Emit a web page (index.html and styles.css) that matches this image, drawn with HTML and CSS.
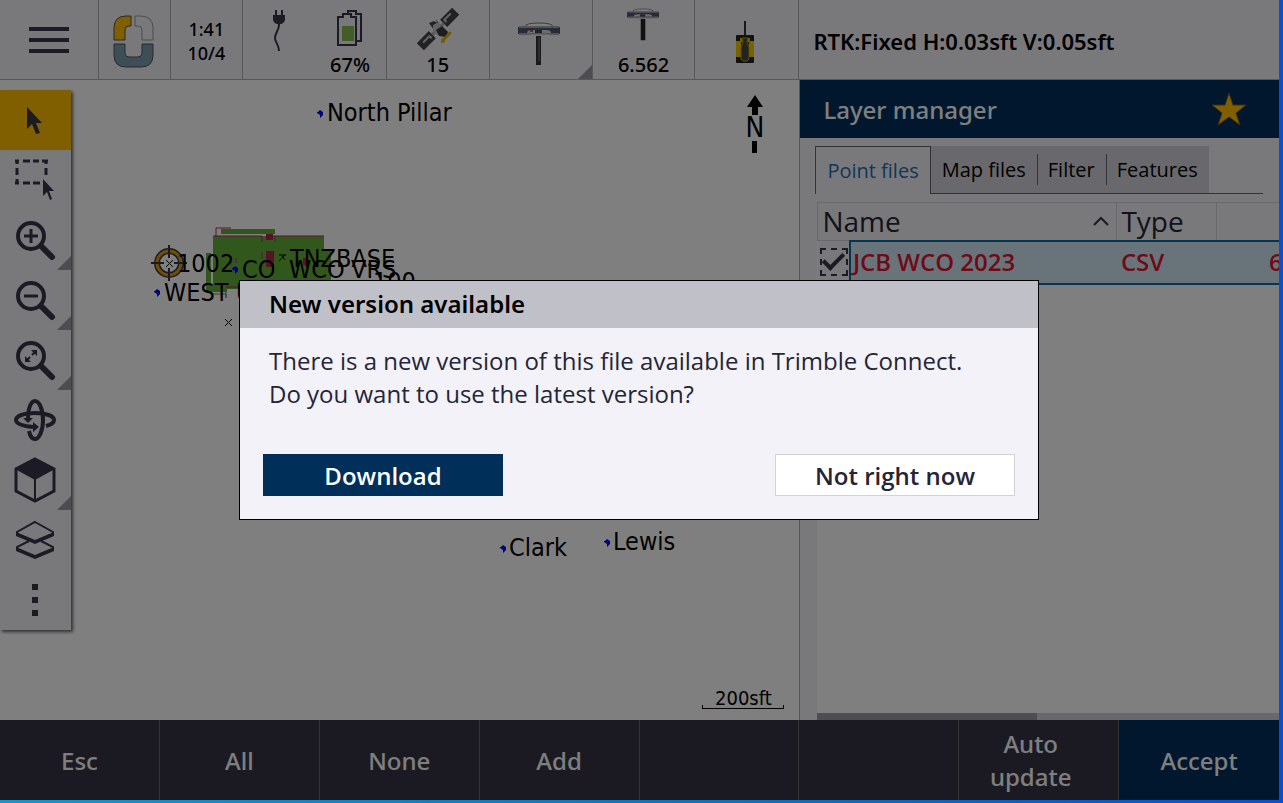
FILE: index.html
```html
<!DOCTYPE html>
<html lang="en">

<head>
    <meta charset="utf-8">
    <title>Layer manager</title>
    <link rel="stylesheet" href="styles.css">
</head>

<body>
    <div class="app">
        <header class="status-bar">
            <button class="status-item item-menu" aria-label="Menu">
                <svg width="42" height="28" viewBox="0 0 42 28"><path d="M1 3h40M1 14h40M1 25h40" stroke="#38364a" stroke-width="4" /></svg>
            </button>
            <button class="status-item item-logo" aria-label="Home">
                <svg width="42" height="54" viewBox="0 0 42 54" stroke-width="1">
                    <path d="M1 25V13Q1 1 13 1h5v10h-2q-4 0-4 4v10z" fill="#ffbe00" stroke="#555" />
                    <path d="M22 1h5q13 0 13 12v12H29V15q0-4-4-4h-3z" fill="#f2f2f6" stroke="#999" />
                    <path d="M1 29h11v9q0 4 4 4h9q4 0 4-4v-9h11v11q0 12-12 12H13Q1 52 1 40z" fill="#7b9cae" stroke="#555" />
                </svg>
            </button>
            <div class="status-item item-clock">1:41<br>10/4</div>
            <button class="status-item item-power" aria-label="Battery 67%">
                <span class="power-cell">
                    <svg width="14" height="42" viewBox="0 0 14 42"><path d="M4 0v6M10 0v6" stroke="#38364a" stroke-width="2" /><path d="M1 5h12v4q0 4-4 5H5q-4-1-4-5z" fill="#38364a" /><path d="M7 13v2c0 5-4 8-4 13 0 4 4 7 4 13" fill="none" stroke="#38364a" stroke-width="2" /></svg>
                </span>
                <span class="power-cell">
                    <svg width="26" height="36" viewBox="0 0 26 36" fill="none" stroke="#38364a" stroke-width="2"><path d="M6 6V4h5V1h8v3h5v27h-4" /><path d="M1 35V7h5V4h8v3h5v28z" fill="#f2f2f8" /><path d="M5 16h12v15H5z" fill="#85bb50" stroke="none" /></svg>
                    67%
                </span>
            </button>
            <button class="status-item" aria-label="15 satellites">
                <svg class="satellite" width="42" height="42" viewBox="0 0 42 42">
                    <g transform="rotate(-45 21 21)"><path d="M-4 16h17v10H-4zM29 16h17v10H29z" fill="#454545" /><path d="M1 20h9v3M32 22v-3h9" fill="none" stroke="#c8c8d0" stroke-width="2" /><path d="M13 21h16" stroke="#aaa" stroke-width="3" /></g>
                    <path d="M12 15l5-2 3 2-1-4 3 5-5 6z" fill="#444" /><path d="M16 17l6-3 3 8-5 5-4-3z" fill="#c8c8d0" /><path d="M19 22l6-4 6 6-2 5-7-1z" fill="#3d3d3d" /><path d="M25 33l8-8" stroke="#e0b400" stroke-width="3" /><path d="M34 24l-3 3M28 33l-4 1" stroke="#e0b400" stroke-width="2" />
                </svg>
                15
            </button>
            <button class="status-item item-receiver has-more" aria-label="Receiver">
                <svg width="42" height="44" viewBox="0 0 42 44"><path d="M7 5q0-4 14-4t14 4z" fill="#fff" stroke="#777" /><path d="M0 5h42v7H0z" fill="#4c5670" /><path d="M1 5h40M1 12h40" stroke="#aaa" stroke-width="2" /><path d="M9 11q0-3 5-3h14q5 0 5 3z" fill="#ddd" /><path d="M17 8h7v3h-7z" fill="#445" /><path d="M12 9h3" stroke="#b55" stroke-width="2" /><path d="M11 13h20" stroke="#eee" /><path d="M18 14h5v29h-5z" fill="#333" /><path d="M21 15v24" stroke="#888" /></svg>
            </button>
            <button class="status-item" aria-label="Antenna height 6.562">
                <svg width="32" height="34" viewBox="0 0 42 44"><path d="M7 5q0-4 14-4t14 4z" fill="#fff" stroke="#777" /><path d="M0 5h42v7H0z" fill="#4c5670" /><path d="M1 5h40M1 12h40" stroke="#aaa" stroke-width="2" /><path d="M9 11q0-3 5-3h14q5 0 5 3z" fill="#ddd" /><path d="M17 8h7v3h-7z" fill="#445" /><path d="M18 14h6v28h-6z" fill="#222" /></svg>
                6.562
            </button>
            <button class="status-item item-radio" aria-label="Instrument">
                <svg width="18" height="42" viewBox="0 0 18 42"><path d="M9 0v16" stroke="#333" stroke-width="2" /><rect y="14" width="18" height="28" rx="1" fill="#222" /><path d="M0 20h5v16H0zM13 20h5v16h-5z" fill="#eec800" /><path d="M4 17h10v4H4z" fill="#ddbb00" /><path d="M6 17h6l-1 4 2 5v12l-2 2H7l-2-2V26l2-5z" fill="#444" stroke="#bba000" stroke-width="1" /></svg>
            </button>
        </header>
        <div class="rtk-status">RTK:Fixed H:0.03sft V:0.05sft</div>

        <main class="map">
            <svg class="map-drawing" role="img" aria-label="Map">
                <g fill="#65af38">
                    <path d="M213 156h111v53H213z" />
                    <path d="M221 149h54v5h-54z" />
                    <path d="M206 173h5v38h-5zM206 206h21v6h-21z" />
                    <path d="M313 170h18v32h-18z" />
                </g>
                <path d="M216 156v-8h15M213 156h49M272 156h52M226 207h12" stroke="#b02060" fill="none" />
                <path d="M266 154h7v6h-7zM266 171h8v16h-8zM303 178h4v7h-4z" fill="#b0244c" />
                <path d="M262 156v6M275 156v6M262 172v7M231 180v5M236 178v5" stroke="#b020a0" />
                <path d="M211 214h15v4M226 218v-9" stroke="#777" fill="none" />
                <g stroke="#000" fill="none">
                    <path d="M225 239l7 7M232 239l-7 7" />
                    <path d="M279 175h7M279 181l6-6M282 176l3 4" />
                </g>
                <g fill="none">
                    <circle cx="169" cy="183" r="12" stroke="#38364a" stroke-width="6" />
                    <circle cx="169" cy="183" r="12" stroke="#e0a000" stroke-width="3" />
                    <path d="M151 183h13M174 183h13M169 165v13M169 188v13" stroke="#38364a" stroke-width="2" />
                    <path d="M166 180l7 7M173 180l-7 7" stroke="#000" />
                </g>
                <g fill="#0000ff">
                    <path id="dot" d="M317 32h1l2-2 3 2v3l-3 3v-3l-3-2z" />
                    <use href="#dot" x="-163" y="179" />
                    <use href="#dot" x="-85" y="156" />
                    <use href="#dot" x="183" y="435" />
                    <use href="#dot" x="287" y="429" />
                </g>
                <g class="labels">
                    <text x="327" y="41">North Pillar</text>
                    <text x="177" y="192">1002</text>
                    <text x="242" y="198">CO</text>
                    <text x="289" y="198">WCO</text>
                    <text x="351" y="198">VRS</text>
                    <text x="290" y="187">TNZBASE</text>
                    <text x="373" y="210">100</text>
                    <text x="164" y="221">WEST</text>
                    <text x="236" y="221">U</text>
                    <text x="509" y="476">Clark</text>
                    <text x="613" y="470">Lewis</text>
                </g>
            </svg>
            <div class="compass">
                <svg width="16" height="20" viewBox="0 0 16 20"><path d="M8 0l8 12h-5v8H5v-8H0z" /></svg>
                <span>N</span>
                <svg width="5" height="12" viewBox="0 0 5 12"><path d="M0 0h5v12H0z" /></svg>
            </div>
            <div class="scale">200sft</div>

            <nav class="toolbar" aria-label="Map tools">
                <button class="tool selected" aria-label="Select">
                    <svg width="42" height="42" viewBox="0 0 42 42"><path d="M13 8v22l5-5 4 10 4-1-4-10h6z" /></svg>
                </button>
                <button class="tool" aria-label="Rectangle select">
                    <svg width="42" height="42" viewBox="0 0 42 42"><path d="M1 2h4M9 2h7M19 2h6M28 2h6M1 24h4M9 24h7M19 24h7M3 1v4M3 9v7M3 20v5M32 1v4M32 9v7" fill="none" stroke="#38364a" stroke-width="3" /><path d="M29 20v17l4-4 3 8 2-1-3-8h5z" /></svg>
                </button>
                <button class="tool has-more" aria-label="Zoom in">
                    <svg width="42" height="42" viewBox="0 0 42 42"><g fill="none" stroke="#38364a"><circle cx="17" cy="17" r="13" stroke-width="4" /><path d="M27 27l11 11" stroke-width="6" stroke-linecap="round" /><path d="M10 17h14M17 10v14" stroke-width="3" /></g></svg>
                </button>
                <button class="tool has-more" aria-label="Zoom out">
                    <svg width="42" height="42" viewBox="0 0 42 42"><g fill="none" stroke="#38364a"><circle cx="17" cy="17" r="13" stroke-width="4" /><path d="M27 27l11 11" stroke-width="6" stroke-linecap="round" /><path d="M10 17h14" stroke-width="3" /></g></svg>
                </button>
                <button class="tool has-more" aria-label="Zoom extents">
                    <svg width="42" height="42" viewBox="0 0 42 42"><g fill="none" stroke="#38364a"><circle cx="17" cy="17" r="13" stroke-width="4" /><path d="M27 27l11 11" stroke-width="6" stroke-linecap="round" /><path d="M12 22l4-4M18 16l4-4" stroke-width="2" /></g><path d="M17 11h6v6zM11 17v6h6z" /></svg>
                </button>
                <button class="tool" aria-label="Orbit">
                    <svg width="42" height="42" viewBox="0 0 42 42"><g fill="none" stroke="#38364a" stroke-width="4"><path d="M14 20C14 9 17 2 21 2s8 8 8 19-4 19-8 19c-3 0-5-3-6-8" /><path d="M19 28C9 27 2 25 2 21s8-7 19-7 19 3 19 7c0 3-4 5-8 6" /></g><path d="M9 19h10l-5 5zM19 23l6 5-6 5z" /></svg>
                </button>
                <button class="tool has-more" aria-label="View">
                    <svg width="42" height="46" viewBox="0 0 42 46"><path d="M21 2l19 10v22L21 44 2 34V12z" fill="none" stroke="#38364a" stroke-width="3" /><path d="M21 1l20 11-20 11L1 12z" /><path d="M21 22v22" stroke="#38364a" stroke-width="2" /></svg>
                </button>
                <button class="tool" aria-label="Layers">
                    <svg width="40" height="40" viewBox="0 0 40 40"><path d="M20 2l18 10v2L20 22 2 14v-2zM14 21L2 27v2l18 8 18-8v-2l-12-6" fill="none" stroke="#38364a" stroke-width="2" /><path d="M1 12l19 8 19-8v4l-19 8-19-8zM1 27l19 8 19-8v4l-19 8-19-8z" /></svg>
                </button>
                <button class="tool" aria-label="More">
                    <svg width="6" height="34" viewBox="0 0 6 34"><path d="M0 1h6v6H0zM0 14h6v6H0zM0 27h6v6H0z" /></svg>
                </button>
            </nav>
        </main>

        <section class="panel">
            <div class="panel-title">
                <h1>Layer manager</h1>
                <button class="favorite" aria-label="Favorite">
                    <svg width="36" height="34" viewBox="0 0 36 34"><path d="M18 1l4 12h13l-10 8 4 12-11-8-11 8 4-12L1 13h13z" fill="#ffbe00" stroke="#7a5c20" /></svg>
                </button>
            </div>
            <div class="tabs">
                <button class="tab active">Point files</button>
                <button class="tab">Map files</button>
                <button class="tab">Filter</button>
                <button class="tab">Features</button>
            </div>
            <div class="file-list">
                <table>
                    <colgroup>
                        <col class="col-check">
                        <col class="col-name">
                        <col class="col-type">
                        <col>
                    </colgroup>
                    <thead>
                        <tr>
                            <th colspan="2"><span class="sort">Name <svg width="16" height="10" viewBox="0 0 16 10"><path d="M1 9l7-7 7 7" fill="none" stroke="#38364a" stroke-width="2" /></svg></span></th>
                            <th>Type</th>
                            <th></th>
                        </tr>
                    </thead>
                    <tbody>
                        <tr>
                            <td class="cell-check"><input type="checkbox" id="file1" checked></td>
                            <td class="cell-file"><label for="file1">JCB WCO 2023</label></td>
                            <td>CSV</td>
                            <td class="cell-size">6</td>
                        </tr>
                    </tbody>
                </table>
                <div class="scrollbar"><div class="thumb"></div></div>
            </div>
        </section>

        <footer class="softkeys">
            <button>Esc</button>
            <button>All</button>
            <button>None</button>
            <button>Add</button>
            <button aria-label="Unused"></button>
            <button aria-label="Unused"></button>
            <button class="two-line">Auto<br>update</button>
            <button class="accept">Accept</button>
        </footer>

        <div class="backdrop">
            <div class="dialog" role="dialog" aria-labelledby="dialog-title">
                <h2 id="dialog-title">New version available</h2>
                <p>There is a new version of this file available in Trimble Connect.<br>Do you want to use the latest version?</p>
                <div class="dialog-buttons">
                    <button class="primary">Download</button>
                    <button>Not right now</button>
                </div>
            </div>
        </div>
    </div>
</body>

</html>
```
FILE: styles.css
```css
* {
    box-sizing: border-box;
}

body {
    margin: 0;
    padding: 0 4px 3px 0;
    height: 100vh;
    background: linear-gradient(90deg, #0f97cf, #0a6fc0 60%, #0a4fd0);
    font-family: "Open Sans", "Noto Sans", sans-serif;
    color: #252535;
}

button {
    margin: 0;
    padding: 0;
    border: 0;
    background: none;
    font: inherit;
    color: inherit;
}

svg {
    display: block;
}

.app {
    position: relative;
    display: grid;
    grid-template-columns: 5fr 3fr;
    grid-template-rows: 80px 1fr 80px;
    height: 100%;
    overflow: hidden;
    background: #fff;
}

/* Open Sans has no medium weight */
.status-bar,
.rtk-status,
.panel-title,
.softkeys,
.dialog h2 {
    font-family: "Noto Sans", "Open Sans", sans-serif;
}

/* status bar */

.status-bar {
    display: grid;
    grid-template-columns: 99fr 72fr 72fr 144fr 103fr 103fr 103fr 104fr;
    background: #f2f2f8;
    border-bottom: 1px solid #b0b0b8;
}

.status-item {
    position: relative;
    display: flex;
    flex-direction: column;
    align-items: center;
    justify-content: space-between;
    padding: 8px 0 2px;
    border-right: 1px solid #b0b0b8;
    font-size: 20px;
    font-weight: 500;
    line-height: 24px;
    color: #000;
}

.item-menu,
.item-logo,
.item-clock,
.item-receiver,
.item-radio {
    justify-content: center;
    padding: 0;
}

.item-logo {
    padding-top: 5px;
}

.item-clock {
    padding-top: 2px;
    font-size: 18px;
    text-align: center;
}

.item-receiver {
    padding: 8px 4px 0 0;
}

.item-radio {
    padding: 4px 4px 0 0;
}

.item-power {
    flex-direction: row;
}

.power-cell {
    display: flex;
    flex: 1;
    flex-direction: column;
    align-items: center;
    justify-content: space-between;
    height: 100%;
    padding-top: 2px;
}

.satellite {
    overflow: visible;
}

.has-more::after {
    content: "";
    position: absolute;
    right: 0;
    bottom: 0;
    border-left: 14px solid transparent;
    border-bottom: 14px solid #9999a3;
}

.rtk-status {
    display: flex;
    align-items: center;
    padding: 2px 0 0 14px;
    background: #f2f2f8;
    border-bottom: 1px solid #b0b0b8;
    font-size: 22px;
    font-weight: 600;
    color: #000;
}

/* map */

.map {
    position: relative;
    background: #fff;
    overflow: hidden;
}

.map-drawing {
    width: 100%;
    height: 100%;
}

.labels,
.compass,
.scale {
    font-family: "DejaVu Sans Condensed", "DejaVu Sans", sans-serif;
    font-stretch: condensed;
    font-size: 25px;
}

.compass {
    position: absolute;
    top: 15px;
    right: 35px;
    display: flex;
    flex-direction: column;
    align-items: center;
    line-height: 26px;
    color: #000;
}

.compass span {
    font-size: 28px;
}

.scale {
    position: absolute;
    right: 15px;
    bottom: 11px;
    width: 82px;
    height: 23px;
    border-bottom: 1px solid #000;
    font-size: 20px;
    line-height: 24px;
    text-align: center;
    color: #000;
}

.scale::before {
    content: "";
    position: absolute;
    left: 0;
    right: 0;
    bottom: 0;
    height: 3px;
    border: solid #000;
    border-width: 0 1px;
}

.toolbar {
    position: absolute;
    top: 10px;
    left: 0;
    width: 71px;
    background: #f2f2f8;
    box-shadow: 2px 2px 3px #666;
}

.tool {
    position: relative;
    display: flex;
    align-items: center;
    justify-content: center;
    width: 100%;
    height: 60px;
    padding-right: 2px;
    fill: #38364a;
}

.tool.selected {
    background: #ffbe00;
}

/* layer manager */

.panel {
    display: flex;
    flex-direction: column;
    min-width: 0;
    overflow: hidden;
    background: #f2f2f8;
    border-left: 1px solid #b0b0b8;
}

.panel-title {
    display: flex;
    align-items: center;
    justify-content: space-between;
    height: 58px;
    padding: 0 32px 0 23px;
    background: #002f5a;
    color: #fff;
}

.panel-title h1 {
    margin: 0;
    font-size: 24px;
    font-weight: 500;
}

.tabs {
    display: flex;
    margin: 8px 16px 0 15px;
    border-bottom: 1px solid #66666f;
}

.tab {
    position: relative;
    height: 47px;
    padding: 0 11px;
    background: #d2d2da;
    font-size: 20px;
    color: #000;
}

.tab.active {
    height: 48px;
    margin-bottom: -1px;
    border: 1px solid #66666f;
    border-bottom: 0;
    background: #f2f2f8;
    color: #1a6fb5;
}

.tab:not(.active) + .tab::before {
    content: "";
    position: absolute;
    top: 8px;
    bottom: 8px;
    left: 0;
    border-left: 1px solid #66666f;
}

.file-list {
    flex: 1;
    display: flex;
    flex-direction: column;
    justify-content: space-between;
    margin: 8px 0 0 17px;
    background: #fff;
}

table {
    width: 100%;
    table-layout: fixed;
    border-collapse: collapse;
}

.col-check {
    width: 32px;
}

.col-name {
    width: 267px;
}

.col-type {
    width: 100px;
}

th {
    height: 38px;
    padding: 0 4px;
    background: #f2f2f8;
    border: 1px solid #d2d2da;
    border-right: 0;
    font-size: 28px;
    font-weight: 400;
    line-height: 36px;
    text-align: left;
}

.sort {
    display: flex;
    align-items: center;
    justify-content: space-between;
    padding-right: 3px;
}

td {
    height: 43px;
    padding: 0 4px;
    background: #d2e9f5;
    border: solid #0a6aa5;
    border-width: 2px 0;
    font-size: 24px;
    font-weight: 600;
    line-height: 36px;
    white-space: nowrap;
    color: #e0142d;
}

.cell-check {
    padding: 0 2px;
    border: 0;
    background: #f2f2f8;
}

.cell-file {
    padding: 0 2px;
    border-left: 2px solid #0a6aa5;
}

.cell-size {
    padding: 0 0 0 52px;
}

input[type="checkbox"] {
    appearance: none;
    display: grid;
    place-items: center;
    width: 28px;
    height: 28px;
    margin: 0;
    border: 2px dashed #38364a;
}

input[type="checkbox"]:checked::before {
    content: "";
    width: 17px;
    height: 8px;
    margin-bottom: 6px;
    border: solid #38364a;
    border-width: 0 0 4px 4px;
    transform: rotate(-45deg);
}

.scrollbar {
    height: 7px;
    background: #d2d2da;
}

.thumb {
    width: 220px;
    height: 100%;
    background: #9a9aa5;
}

/* softkeys */

.softkeys {
    grid-column: 1 / -1;
    display: grid;
    grid-template-columns: repeat(8, 1fr);
    background: #373545;
}

.softkeys button {
    border-right: 1px solid #66666f;
    font-size: 24px;
    font-weight: 500;
    line-height: 33px;
    color: #fff;
}

.softkeys .two-line {
    padding-right: 16px;
}

.softkeys .accept {
    background: #002f5a;
    border-right: 0;
}

/* dialog */

.backdrop {
    position: absolute;
    inset: 0;
    display: grid;
    place-items: center;
    padding-right: 1px;
    background: rgba(0, 0, 0, 0.5);
}

.dialog {
    width: 100%;
    max-width: 800px;
    border: 1px solid #000;
    background: #f2f2f8;
    font-size: 24px;
}

.dialog h2 {
    margin: 0;
    padding: 0 29px 1px;
    background: #c0c0c9;
    font-size: 24px;
    font-weight: 600;
    line-height: 46px;
    color: #000;
}

.dialog p {
    margin: 0;
    padding: 16px 29px 0;
    line-height: 33px;
}

.dialog-buttons {
    display: flex;
    justify-content: space-between;
    padding: 44px 23px 23px;
}

.dialog-buttons button {
    width: 240px;
    height: 42px;
    border: 1px solid #d2d2da;
    background: #fff;
    font-weight: 600;
}

.dialog-buttons .primary {
    border-color: #002f5a;
    background: #002f5a;
    color: #fff;
}
```
